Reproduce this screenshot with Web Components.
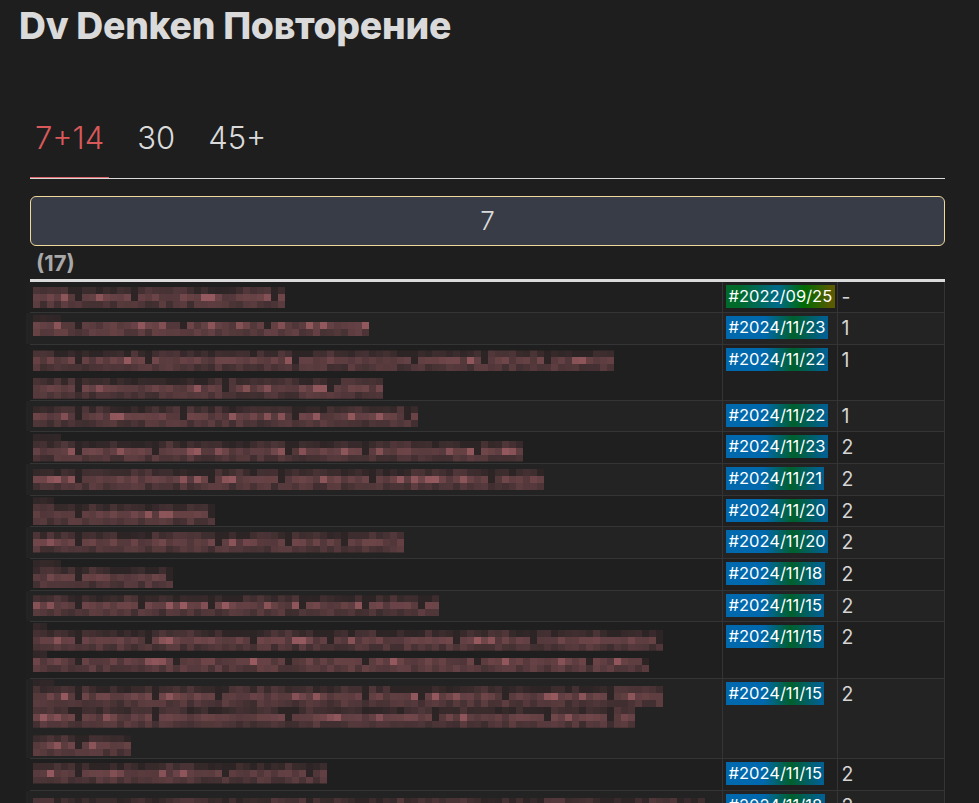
<!DOCTYPE html>
<html>
<head>
<meta charset="utf-8">
<title>Dv Denken</title>
<style>
  html, body { margin: 0; height: 100%; overflow: hidden; background: #1e1e1e; }
  body { font-family: Inter, "Liberation Sans", sans-serif; color: #dadada; }
</style>
</head>
<body>
<dv-page>
  <span slot="title">Dv Denken Повторение</span>
  <dv-tabs>
    <dv-tab active>7+14</dv-tab>
    <dv-tab>30</dv-tab>
    <dv-tab>45+</dv-tab>
  </dv-tabs>
  <dv-collapse>7</dv-collapse>
  <dv-count>(17)</dv-count>
  <note-table>
    <note-row lines="287,252" tag="#2022/09/25" old num="-"></note-row>
    <note-row lines="322,336,d2" tag="#2024/11/23" num="1"></note-row>
    <note-row lines="350,580;378,348" tag="#2024/11/22" num="1"></note-row>
    <note-row lines="406,384" tag="#2024/11/22" num="1"></note-row>
    <note-row lines="441,490,d" tag="#2024/11/23" num="2"></note-row>
    <note-row lines="469,511" tag="#2024/11/21" num="2"></note-row>
    <note-row lines="504,182,d" tag="#2024/11/20" num="2"></note-row>
    <note-row lines="532,371" tag="#2024/11/20" num="2"></note-row>
    <note-row lines="567,140,d" tag="#2024/11/18" num="2"></note-row>
    <note-row lines="595,406" tag="#2024/11/15" num="2"></note-row>
    <note-row lines="630,630,d;658,616,d2" tag="#2024/11/15" num="2"></note-row>
    <note-row lines="686,630,d;707,602;735,98" tag="#2024/11/15" num="2"></note-row>
    <note-row lines="763,294" tag="#2024/11/15" num="2"></note-row>
    <note-row lines="798,672" tag="#2024/11/18" num="2"></note-row>
  </note-table>
</dv-page>

<script>
class DvPage extends HTMLElement {
  constructor() {
    super();
    this.attachShadow({ mode: 'open' }).innerHTML = `
    <style>
    :host { display: block; }
    h1 { margin: 0; padding: 7px 0 0 19px; font-size: 37.3px; line-height: 38px; font-weight: 800; color: #dadada; letter-spacing: -0.25px; }
    main { margin: 0 34px 0 30px; padding-top: 61px; }
    </style>
    <h1><slot name="title"></slot></h1>
    <main><slot></slot></main>`;
  }
}

class DvTabs extends HTMLElement {
  constructor() {
    super();
    this.attachShadow({ mode: 'open' }).innerHTML = `
    <style>
    :host { display: flex; gap: 23px; border-bottom: 1px solid #dadada; }
    </style>
    <slot></slot>`;
  }
}

class DvTab extends HTMLElement {
  constructor() {
    super();
    this.attachShadow({ mode: 'open' }).innerHTML = `
    <style>
    :host { display: block; padding: 14px 5px 21px; font-size: 31px; line-height: 36px; font-weight: 300; color: #dadada; border-bottom: 1px solid transparent; }
    :host([active]) { color: #d9595b; border-bottom-color: #d8686c; }
    </style>
    <slot></slot>`;
  }
}

class DvCollapse extends HTMLElement {
  constructor() {
    super();
    this.attachShadow({ mode: 'open' }).innerHTML = `
    <style>
    :host { display: block; margin-top: 17px; height: 48px; line-height: 48px; text-align: center; font-size: 26px; font-weight: 300; color: #dadada; background: #383c47; border: 1px solid #f0d79b; border-radius: 6px; }
    </style>
    <slot></slot>`;
  }
}

class DvCount extends HTMLElement {
  constructor() {
    super();
    this.attachShadow({ mode: 'open' }).innerHTML = `
    <style>
    :host { display: block; padding: 5px 0 0 6px; line-height: 24px; font-size: 22px; font-weight: 700; color: #a8a8a8; box-sizing: border-box; height: 33px; }
    </style>
    <slot></slot>`;
  }
}

class NoteTable extends HTMLElement {
  constructor() {
    super();
    this.attachShadow({ mode: 'open' }).innerHTML = `
    <style>
    :host { display: block; border-top: 3px solid #dadada; }
    ::slotted(:first-child) { --pad-bottom: 2.3px; }
    </style>
    <slot></slot>`;
  }
}

// the titles are pixelated in the original, so each line is a small mosaic
function mix(v) {
  const a = [44, 36, 37], b = [150, 90, 95];
  return 'rgb(' + a.map((c, i) => Math.round(c + (b[i] - c) * v)).join(',') + ')';
}

let seed = 7;
function rnd() {
  seed = (seed * 16807) % 2147483647;
  return seed / 2147483647;
}

function mosaic(w, flags) {
  const cols = Math.round(w / 7);
  const two = flags.includes('2'), dim = flags.includes('d');
  const base = two ? [0.48, 0.4] : [0.22, 0.5, 0.32];
  let rects = '';
  const gaps = {};
  for (let i = 6; i < cols; i += 8 + Math.floor(rnd() * 14)) gaps[i] = 1;
  const top = dim ? 7 : 0;
  if (dim) {
    const n = Math.min(cols, 2 + Math.floor(rnd() * 3));
    for (let x = 0; x < n; x++) rects += `<rect x="${x * 7}" y="0" width="7" height="7" fill="${mix(0.02 + rnd() * 0.07)}"/>`;
  }
  // stretches of the top row stay dark, where no letter rises
  const low = [];
  for (let x = 0, on = false; x < cols; on = !on) {
    const n = 3 + Math.floor(rnd() * 10);
    for (let i = 0; i < n; i++) low[x++] = on;
  }
  base.forEach((b, r) => {
    for (let x = 0; x < cols; x++) {
      let v = b + (rnd() - 0.5) * 0.3;
      if (r === 0 && !two && low[x]) v -= 0.14;
      if (r === base.length - 2 && rnd() > 0.88) v = 0.8 + rnd() * 0.2;
      if (gaps[x] && r < base.length - 1) v = -0.1;
      rects += `<rect x="${x * 7}" y="${top + r * 7}" width="7" height="7" fill="${mix(Math.max(v, 0))}"/>`;
    }
  });
  const h = top + base.length * 7;
  return { h, top, svg: `<svg width="${cols * 7}" height="${h}" shape-rendering="crispEdges">${rects}</svg>` };
}

class NoteRow extends HTMLElement {
  constructor() {
    super();
    const lines = this.getAttribute('lines').split(';').map(l => l.split(','));
    const html = lines.map(([y, w, f]) => {
      const m = mosaic(+w, f || '');
      return `<div class="line" data-y="${+y - m.top}">${m.svg}</div>`;
    }).join('');
    const tag = this.getAttribute('tag');
    this.attachShadow({ mode: 'open' }).innerHTML = `
    <style>
    :host { display: grid; grid-template-columns: 692px 115px 1fr; background: #1f1f1f; border-bottom: 1px solid #343434; border-right: 1px solid #343434; line-height: 24.64px; }
    :host(:nth-child(even)) { background: #232323; }
    .title { margin-left: -4px; padding: 3px 0 var(--pad-bottom, 3px) 7px; background: inherit; min-width: 0; }
    .line { height: 24.64px; }
    svg { display: block; }
    .date { border-left: 1px solid #343434; padding: 3px 0 var(--pad-bottom, 3px) 3px; }
    .num { border-left: 1px solid #343434; padding: 3px 0 var(--pad-bottom, 3px) 3.5px; font-size: 19.5px; color: #d4d4d4; }
    .tag { display: block; width: fit-content; height: 23px; line-height: 23px; padding: 0 2.5px; font-size: 16.5px; color: #fff; background: linear-gradient(90deg, #0068ad 38%, #00602c 66%, #00608f 96%); }
    :host([old]) .tag { background: linear-gradient(90deg, #006a2a 12%, #006a8a 48%, #006a00 72%, #5a5a00 96%); }
    </style>
    <div class="title">${html}</div>
    <div class="date"><span class="tag">${tag}</span></div>
    <div class="num">${this.getAttribute('num')}</div>`;
  }
  // the mosaic sits on its own 7px grid, not on the text lines
  snap() {
    this.shadowRoot.querySelectorAll('.line').forEach(l => {
      const svg = l.firstElementChild;
      svg.style.transform = `translateY(${+l.dataset.y - svg.getBoundingClientRect().top}px)`;
    });
  }
}

customElements.define('dv-page', DvPage);
customElements.define('dv-tabs', DvTabs);
customElements.define('dv-tab', DvTab);
customElements.define('dv-collapse', DvCollapse);
customElements.define('dv-count', DvCount);
customElements.define('note-table', NoteTable);
customElements.define('note-row', NoteRow);

document.querySelectorAll('note-row').forEach(r => r.snap());
</script>
</body>
</html>
